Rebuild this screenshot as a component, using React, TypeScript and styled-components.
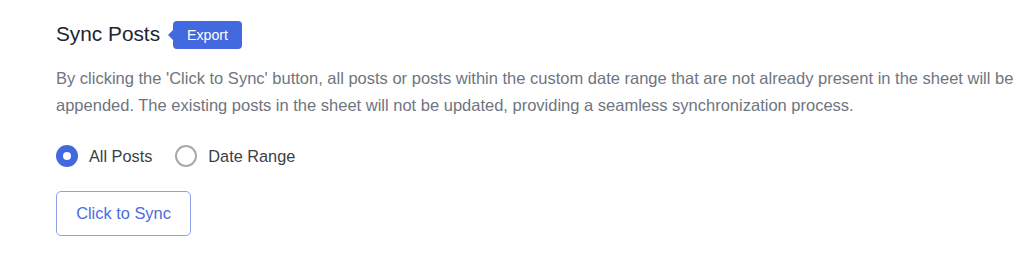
import React, { useState } from "react";
import styled, { createGlobalStyle } from "styled-components";

const GlobalStyle = createGlobalStyle`
  html, body {
    margin: 0;
    padding: 0;
    background: #ffffff;
  }
  body {
    font-family: "Liberation Sans", Arial, sans-serif;
  }
`;

const StSection = styled.section`
  padding: 20px 0 0 56px;
  display: flex;
  flex-direction: column;
  align-items: flex-start;
`;

const StHeader = styled.div`
  display: flex;
  align-items: center;
  gap: 13px;
  height: 28px;
`;

const StTitle = styled.h2`
  margin: 0;
  font-size: 20.8px;
  line-height: 28px;
  font-weight: 400;
  color: #1d2433;
`;

const StBadge = styled.span`
  position: relative;
  display: inline-flex;
  align-items: center;
  height: 28px;
  margin-top: 2px;
  padding: 0 14px;
  background: #4369e0;
  color: #ffffff;
  font-size: 14.2px;
  border-radius: 4px;

  &::before {
    content: "";
    position: absolute;
    left: -5px;
    top: 50%;
    margin-top: -5px;
    border-style: solid;
    border-width: 5px 5px 5px 0;
    border-color: transparent #4369e0 transparent transparent;
  }
`;

const StDescription = styled.p`
  margin: 17px 0 0;
  font-size: 16.5px;
  line-height: 27px;
  color: #6f7580;
`;

const StRadioGroup = styled.div`
  display: flex;
  align-items: center;
  gap: 23px;
  margin-top: 26px;
`;

const StRadioLabel = styled.label`
  display: flex;
  align-items: center;
  gap: 11px;
  font-size: 16.3px;
  color: #3a3f48;
  cursor: pointer;
`;

const StRadioDot = styled.span<{ $checked: boolean }>`
  box-sizing: border-box;
  width: 22px;
  height: 22px;
  border-radius: 50%;
  background: #ffffff;
  border: ${({ $checked }) =>
    $checked ? "7px solid #4369e0" : "2px solid #a7a9ad"};
`;

const StSyncButton = styled.button`
  box-sizing: border-box;
  margin-top: 24px;
  width: 135px;
  height: 45px;
  background: #ffffff;
  border: 1.5px solid #8da2ef;
  border-radius: 5px;
  color: #4a6ce0;
  font-family: inherit;
  font-size: 16.4px;
  cursor: pointer;
`;

type Mode = "all" | "range";

export default function App() {
  const [mode, setMode] = useState<Mode>("all");
  return (
    <>
      <GlobalStyle />
      <StSection>
        <StHeader>
          <StTitle>Sync Posts</StTitle>
          <StBadge>Export</StBadge>
        </StHeader>
        <StDescription>
          By clicking the 'Click to Sync' button, all posts or posts within the
          custom date range that are not already present in the sheet will be
          appended. The existing posts in the sheet will not be updated,
          providing a seamless synchronization process.
        </StDescription>
        <StRadioGroup>
          <StRadioLabel onClick={() => setMode("all")}>
            <StRadioDot $checked={mode === "all"} />
            All Posts
          </StRadioLabel>
          <StRadioLabel onClick={() => setMode("range")}>
            <StRadioDot $checked={mode === "range"} />
            Date Range
          </StRadioLabel>
        </StRadioGroup>
        <StSyncButton>Click to Sync</StSyncButton>
      </StSection>
    </>
  );
}
